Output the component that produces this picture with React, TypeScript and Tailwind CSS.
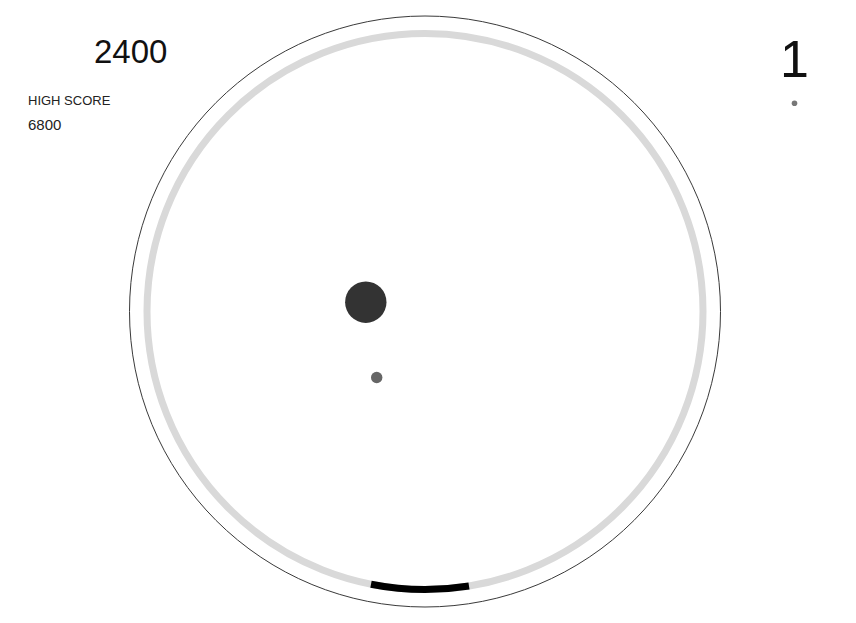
import React from "react";

export default function App() {
  return (
    <div className="relative w-[856px] h-[623px] bg-white overflow-hidden" style={{ fontFamily: '"Liberation Sans", Arial, sans-serif' }}>
      <svg width="856" height="623" viewBox="0 0 856 623" className="block">
        <circle cx="425" cy="311.5" r="295.5" fill="none" stroke="#3a3a3a" strokeWidth="1" />
        <circle cx="425" cy="311.5" r="278" fill="none" stroke="#d9d9d9" strokeWidth="7" />
        <path d="M 371 584.2 A 278 278 0 0 0 469 586" fill="none" stroke="#000" strokeWidth="7" />
        <circle cx="365.8" cy="302.2" r="20.7" fill="#333333" />
        <circle cx="376.7" cy="377.5" r="5.7" fill="#666666" />
        <circle cx="794.5" cy="103.3" r="2.8" fill="#777777" />
      </svg>
      <div className="absolute left-[94px] top-[34.5px] text-[33px] leading-none text-[#111]">2400</div>
      <div className="absolute left-[28px] top-[94.3px] flex flex-col gap-[10px] text-[#222]">
        <div className="text-[13px] leading-none">HIGH SCORE</div>
        <div className="text-[15px] leading-none">6800</div>
      </div>
      <div className="absolute left-[780px] top-[33px] text-[52px] leading-none text-[#111]">1</div>
    </div>
  );
}
